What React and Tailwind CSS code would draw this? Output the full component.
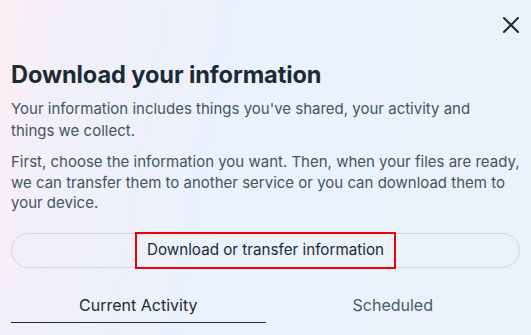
export default function App() {
    return (
        <div className="w-[531px] h-[335px] overflow-hidden bg-[linear-gradient(100deg,#fdf0f3_0%,#f1effa_12%,#eaf2fd_45%,#ecf2fc_100%)] font-['Inter',sans-serif] text-[#1c2b33]">
            {/* Close */}
            <div className="flex justify-end pt-[17px] pr-[12px] h-[50px]">
                <svg width="16" height="16" viewBox="0 0 16 16" className="text-[#1c2b33]">
                    <path d="M1 1 L15 15 M15 1 L1 15" stroke="currentColor" strokeWidth="2" strokeLinecap="square" fill="none" />
                </svg>
            </div>

            <div className="px-[11px]">
                {/* Title */}
                <h1 className="text-[23.6px] leading-[28px] font-bold tracking-[-0.1px] mt-[11px]">
                    Download your information
                </h1>

                <p className="mt-[9px] text-[15px] leading-[22px] text-[#465461]">
                    Your information includes things you've shared, your activity and
                    <br />
                    things we collect.
                </p>
                <p className="mt-[10px] text-[15px] leading-[20.5px] text-[#465461]">
                    First, choose the information you want. Then, when your files are ready,
                    we can transfer them to another service or you can download them to
                    your device.
                </p>

                {/* Action */}
                <div className="mt-[19px] h-[35px] rounded-full border border-[#cfd6dd] flex items-center justify-center">
                    <span className="h-[37px] px-[10px] flex items-center border-2 border-[#f00000] text-[15.2px] text-[#1c2b33]">
                        Download or transfer information
                    </span>
                </div>

                {/* Tabs */}
                <div className="mt-[20px] grid grid-cols-2">
                    <div className="h-[35px] flex items-center justify-center border-b border-[#1c2b33] text-[16px] text-[#1c2b33]">
                        Current Activity
                    </div>
                    <div className="h-[35px] flex items-center justify-center text-[16px] text-[#465a69]">
                        Scheduled
                    </div>
                </div>
            </div>
        </div>
    );
}
